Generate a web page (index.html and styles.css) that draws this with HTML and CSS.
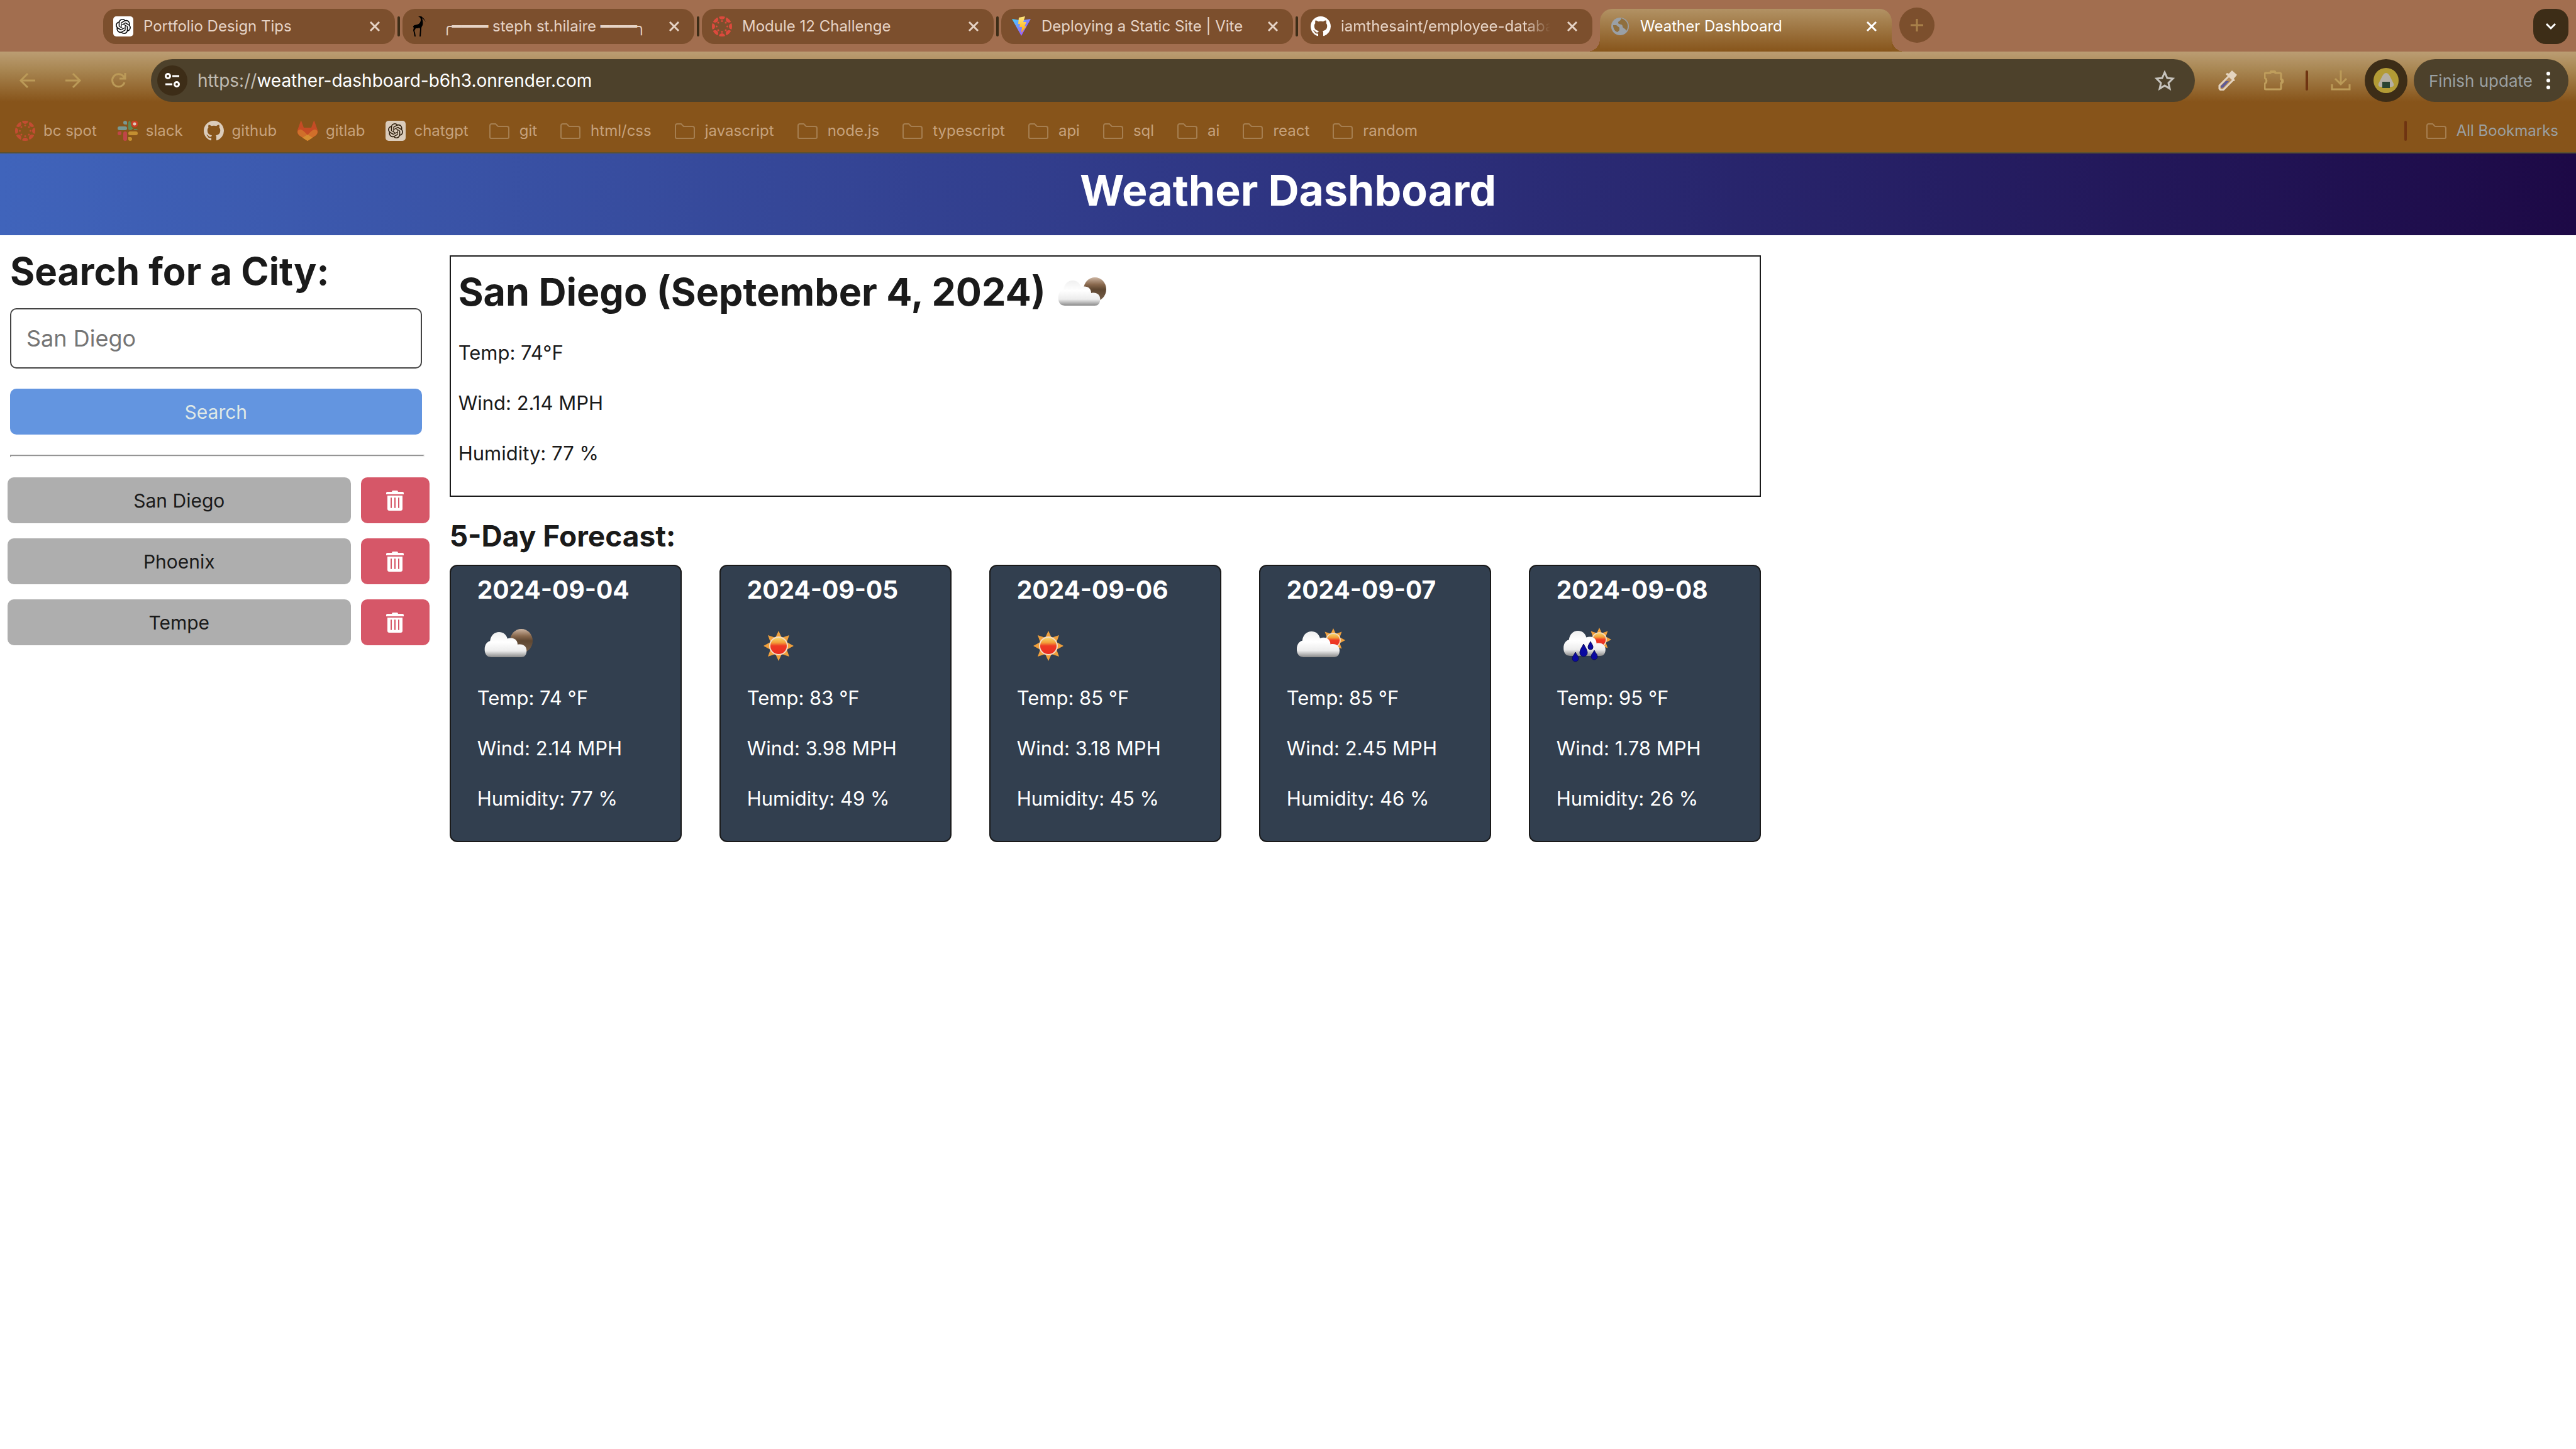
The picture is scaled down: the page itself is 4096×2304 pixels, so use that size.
FILE: index.html
```html
<!DOCTYPE html>
<html lang="en">
<head>
<meta charset="utf-8">
<meta name="viewport" content="width=device-width, initial-scale=1">
<title>Weather Dashboard</title>
<link rel="stylesheet" href="styles.css">
</head>
<body>
<svg class="sprite" aria-hidden="true">
  <defs>
    <linearGradient id="cloud-fill" x1="0" y1="0" x2="0" y2="1"><stop offset="0" stop-color="#f0f0f0"/><stop offset=".4" stop-color="#fff"/><stop offset=".75" stop-color="#ececec"/><stop offset="1" stop-color="#8a8a8a"/></linearGradient>
    <linearGradient id="moon-fill" x1="0" y1="0" x2="0" y2="1"><stop offset="0" stop-color="#cdb5a2"/><stop offset=".3" stop-color="#88684d"/><stop offset=".5" stop-color="#5f4731"/><stop offset="1" stop-color="#77604b"/></linearGradient>
    <linearGradient id="sun-fill" x1="0" y1="0" x2="0" y2="1"><stop offset="0" stop-color="#f7d56a"/><stop offset=".3" stop-color="#f3a03a"/><stop offset=".5" stop-color="#ee3a24"/><stop offset="1" stop-color="#ea2d20"/></linearGradient>
    <linearGradient id="bolt-a" x1="0" y1="0" x2="1" y2="1"><stop offset="0" stop-color="#41d1ff"/><stop offset="1" stop-color="#bd34fe"/></linearGradient>
    <linearGradient id="bolt-b" x1="0" y1="0" x2="0" y2="1"><stop offset="0" stop-color="#ffea83"/><stop offset="1" stop-color="#ffa800"/></linearGradient>
    <symbol id="sun" viewBox="0 0 48 48"><path d="M24 0l5 11 12-4-4 11 11 6-11 6 4 11-12-4-5 11-5-11-12 4 4-11L0 24l11-6-4-11 12 4z" fill="#f0a03c"/><circle cx="24" cy="24" r="15" fill="#f3ddc4"/><circle cx="24" cy="24" r="13" fill="url(#sun-fill)"/></symbol>
    <symbol id="cloud" viewBox="0 0 70 42"><path d="M11 42C3 42 0 36 0 29c0-8 4-13 9-14C10 6 16 0 24 0c7 0 12 4 14 11 9-3 17 1 17 10 9-2 15 3 15 10 0 8-4 11-9 11z" fill="url(#cloud-fill)"/></symbol>
    <symbol id="w-cloud-moon" viewBox="0 0 100 100"><ellipse cx="70" cy="42" rx="18" ry="19" fill="url(#moon-fill)"/><use href="#cloud" x="11" y="28" width="68" height="40"/></symbol>
    <symbol id="w-sun" viewBox="0 0 100 100"><use href="#sun" x="26" y="26" width="48" height="48"/></symbol>
    <symbol id="w-cloud-sun" viewBox="0 0 100 100"><use href="#sun" x="55" y="22" width="38" height="38"/><use href="#cloud" x="16" y="27" width="68" height="41"/></symbol>
    <symbol id="w-rain" viewBox="0 0 100 100"><use href="#sun" x="49" y="21" width="38" height="38"/><use href="#cloud" x="11" y="26" width="67" height="40"/><g fill="#0a09a0" stroke="#0a0a5c" stroke-width="1"><path d="M43 47c3 6 6 9 6 14a6 6 0 0 1-12 0c0-5 3-8 6-14zM54 43c2 4 4 6 4 9a4 4 0 0 1-8 0c0-3 2-5 4-9zM30 60c2 5 5 6 5 10a5 5 0 0 1-10 0c0-4 3-5 5-10zM60 57c2 5 5 6 5 10a5 5 0 0 1-10 0c0-4 3-5 5-10z"/></g></symbol>
    <symbol id="openai" viewBox="0 0 32 32"><rect width="32" height="32" rx="5" fill="#fff"/><path transform="translate(4 4)" fill="#0b0b0b" d="M22.2819 9.8211a5.9847 5.9847 0 0 0-.5157-4.9108 6.0462 6.0462 0 0 0-6.5098-2.9A6.0651 6.0651 0 0 0 4.9807 4.1818a5.9847 5.9847 0 0 0-3.9977 2.9 6.0462 6.0462 0 0 0 .7427 7.0966 5.98 5.98 0 0 0 .511 4.9107 6.051 6.051 0 0 0 6.5146 2.9001A5.9847 5.9847 0 0 0 13.2599 24a6.0557 6.0557 0 0 0 5.7718-4.2058 5.9894 5.9894 0 0 0 3.9977-2.9001 6.0557 6.0557 0 0 0-.7475-7.0729zm-9.022 12.6081a4.4755 4.4755 0 0 1-2.8764-1.0408l.1419-.0804 4.7783-2.7582a.7948.7948 0 0 0 .3927-.6813v-6.7369l2.02 1.1686a.071.071 0 0 1 .038.052v5.5826a4.504 4.504 0 0 1-4.4945 4.4944zm-9.6607-4.1254a4.4708 4.4708 0 0 1-.5346-3.0137l.142.0852 4.783 2.7582a.7712.7712 0 0 0 .7806 0l5.8428-3.3685v2.3324a.0804.0804 0 0 1-.0332.0615L9.74 19.9502a4.4992 4.4992 0 0 1-6.1408-1.6464zM2.3408 7.8956a4.485 4.485 0 0 1 2.3655-1.9728V11.6a.7664.7664 0 0 0 .3879.6765l5.8144 3.3543-2.0201 1.1685a.0757.0757 0 0 1-.071 0l-4.8303-2.7865A4.504 4.504 0 0 1 2.3408 7.872zm16.5963 3.8558L13.1038 8.364 15.1192 7.2a.0757.0757 0 0 1 .071 0l4.8303 2.7913a4.4944 4.4944 0 0 1-.6765 8.1042v-5.6772a.79.79 0 0 0-.407-.667zm2.0107-3.0231l-.142-.0852-4.7735-2.7818a.7759.7759 0 0 0-.7854 0L9.409 9.2297V6.8974a.0662.0662 0 0 1 .0284-.0615l4.8303-2.7866a4.4992 4.4992 0 0 1 6.6802 4.66zM8.3065 12.863l-2.02-1.1638a.0804.0804 0 0 1-.038-.0567V6.0742a4.4992 4.4992 0 0 1 7.3757-3.4537l-.142.0805L8.704 5.459a.7948.7948 0 0 0-.3927.6813zm1.0976-2.3654l2.602-1.4998 2.6069 1.4998v2.9994l-2.5974 1.4997-2.6067-1.4997Z"/></symbol>
    <symbol id="goat" viewBox="0 0 32 32"><path d="M9 0c3-1 6 0 7 2 2 1 3 3 5 7-2-3-4-5-6-6 1 3 2 7 1 11-1 2-2 3-2 5l-1 13h-2l1-12-1-2c-2 1-4 1-6 1l-2 4 1 3 1 6H3L2 26l-1-4 1-4c-2-1-1-3 1-4 3-1 6-1 8-3 2-3 3-6 1-9z" fill="#000"/></symbol>
    <symbol id="canvas" viewBox="0 0 32 32"><clipPath id="round"><circle cx="16" cy="16" r="16"/></clipPath><g fill="#dc4a3d"><g clip-path="url(#round)"><circle cx="16" cy="0" r="5"/><circle cx="16" cy="32" r="5"/><circle cx="0" cy="16" r="5"/><circle cx="32" cy="16" r="5"/><circle cx="5" cy="5" r="5"/><circle cx="27" cy="5" r="5"/><circle cx="5" cy="27" r="5"/><circle cx="27" cy="27" r="5"/></g><circle cx="16" cy="7.500" r="1.500"/><circle cx="16" cy="24.500" r="1.500"/><circle cx="7.500" cy="16" r="1.500"/><circle cx="24.500" cy="16" r="1.500"/><circle cx="10" cy="10" r="1.500"/><circle cx="22" cy="10" r="1.500"/><circle cx="10" cy="22" r="1.500"/><circle cx="22" cy="22" r="1.500"/></g></symbol>
    <symbol id="vite" viewBox="0 0 32 32"><path d="M1 4l12 2h6l12-2L16 31z" fill="url(#bolt-a)"/><path d="M12 2l10-2-3 9h5l-3 7h3l-8 10 1-9h-4l1-5h-3z" fill="url(#bolt-b)"/></symbol>
    <symbol id="github" viewBox="0 0 16 16"><path fill="#fff" d="M8 0C3.580 0 0 3.580 0 8c0 3.540 2.290 6.530 5.470 7.590.4.070.550-.170.550-.380 0-.190-.010-.820-.010-1.490-2.010.370-2.530-.490-2.690-.940-.090-.230-.480-.940-.820-1.130-.280-.150-.680-.520-.010-.530.630-.010 1.080.580 1.230.820.720 1.210 1.870.870 2.330.660.070-.520.280-.870.510-1.070-1.780-.2-3.640-.890-3.640-3.950 0-.870.310-1.590.820-2.150-.080-.2-.360-1.020.080-2.120 0 0 .670-.210 2.200.820.640-.180 1.320-.270 2-.270s1.360.090 2 .270c1.530-1.040 2.200-.820 2.200-.820.440 1.100.160 1.920.080 2.120.510.560.820 1.270.820 2.150 0 3.070-1.870 3.750-3.650 3.950.290.250.540.730.540 1.480 0 1.070-.010 1.930-.010 2.200 0 .210.150.460.550.380A8.010 8.010 0 0 0 16 8c0-4.420-3.580-8-8-8z"/></symbol>
    <symbol id="globe" viewBox="0 0 32 32"><circle cx="16" cy="16" r="14" fill="#9aa0a6"/><path d="M5 14h5l5 4v4l-3 3c-4-1-7-5-7-11zM18 3c0 4-5 4-5 7 0 4 7 1 7 6 0 3 5 3 6 7 5-7 2-17-8-20z" fill="#8f6f3e"/></symbol>
    <symbol id="slack" viewBox="0 0 32 32"><g fill="#72b6c4"><rect y="9" width="15" height="6" rx="3"/><path d="M15 6h-3a3 3 0 1 1 3-3z"/></g><g fill="#4ea06e"><path d="M17 3c0-2 2-3 3-3l2 9 3 4h-2l-1 2h-2a3 3 0 0 1-3-3zM26 13h6a3 3 0 0 1-3 2h-3z"/></g><g fill="#d93f5c"><rect x="9" y="17" width="6" height="15" rx="3"/><path d="M6 17v3a3 3 0 1 1-3-3z"/></g><g fill="#dda93c"><rect x="17" y="17" width="15" height="6" rx="3"/><path d="M17 26h3a3 3 0 1 1-3 3z"/></g><circle cx="27" cy="5" r="4" fill="#fff" stroke="#e5372b" stroke-width="3"/></symbol>
    <symbol id="gitlab" viewBox="0 0 32 32"><path d="M6 0l4 11h12l4-11c1 0 1 0 1 1l5 14c1 4-1 7-4 9L16 32 4 24c-3-2-5-5-4-9L5 1c0-1 0-1 1-1z" fill="#e0492b"/><path d="M0 17c3-5 8-4 16 6 8-10 13-11 16-6 0 3-2 6-4 7L16 32 4 24c-2-1-4-4-4-7z" fill="#f07b32"/><path d="M16 22l8 5-8 5-8-5z" fill="#f6a63a"/></symbol>
    <symbol id="folder" viewBox="0 0 32 32"><path d="M1 26V8a3 3 0 0 1 3-3h6l4 4h14a3 3 0 0 1 3 3v14a2 2 0 0 1-2 2H3a2 2 0 0 1-2-2z" fill="none" stroke="#b39168" stroke-width="2"/></symbol>
    <symbol id="close" viewBox="0 0 24 24"><path d="M5 5l14 14M19 5L5 19" stroke="currentColor" stroke-width="3" fill="none"/></symbol>
    <symbol id="trash" viewBox="0 0 28 32"><path fill="#fff" d="M10 0h8l1 2h7a2 2 0 0 1 2 2v2H0V4a2 2 0 0 1 2-2h7zM2 8h24v21a3 3 0 0 1-3 3H5a3 3 0 0 1-3-3z"/><path d="M8 12v15M14 12v15M20 12v15" stroke="#d65768" stroke-width="2" stroke-linecap="round"/></symbol>
  </defs>
</svg>

<div class="browser">
  <div class="tabstrip">
    <div class="tab"><svg class="i32"><use href="#openai"/></svg><span class="tab-title">Portfolio Design Tips</span><button class="tab-close" aria-label="Close tab"><svg class="i24"><use href="#close"/></svg></button></div>
    <span class="tab-sep"></span>
    <div class="tab"><svg class="i32"><use href="#goat"/></svg><span class="tab-title">╭━━━━ steph st.hilaire ━━━━╮</span><button class="tab-close" aria-label="Close tab"><svg class="i24"><use href="#close"/></svg></button></div>
    <span class="tab-sep"></span>
    <div class="tab"><svg class="i32"><use href="#canvas"/></svg><span class="tab-title">Module 12 Challenge</span><button class="tab-close" aria-label="Close tab"><svg class="i24"><use href="#close"/></svg></button></div>
    <span class="tab-sep"></span>
    <div class="tab"><svg class="i32"><use href="#vite"/></svg><span class="tab-title">Deploying a Static Site | Vite</span><button class="tab-close" aria-label="Close tab"><svg class="i24"><use href="#close"/></svg></button></div>
    <span class="tab-sep"></span>
    <div class="tab"><svg class="i32"><use href="#github"/></svg><span class="tab-title tab-title-fade">iamthesaint/employee-databa</span><button class="tab-close" aria-label="Close tab"><svg class="i24"><use href="#close"/></svg></button></div>
    <span class="tab-sep tab-sep-blank"></span>
    <div class="tab tab-active"><svg class="i32"><use href="#globe"/></svg><span class="tab-title">Weather Dashboard</span><button class="tab-close" aria-label="Close tab"><svg class="i24"><use href="#close"/></svg></button></div>
    <button class="new-tab" aria-label="New tab"><svg class="i24" viewBox="0 0 24 24"><path d="M12 2v20M2 12h20" stroke="#a9814a" stroke-width="3"/></svg></button>
    <button class="tab-search" aria-label="Search tabs"><svg class="i24" viewBox="0 0 24 24"><path d="M5 8l7 7 7-7" fill="none" stroke="#fff" stroke-width="3"/></svg></button>
  </div>

  <div class="toolbar">
    <div class="nav">
      <button class="icon-button" aria-label="Back"><svg class="i32" viewBox="0 0 32 32"><path d="M28 16H6M16 5L5 16l11 11" class="line"/></svg></button>
      <button class="icon-button" aria-label="Forward"><svg class="i32" viewBox="0 0 32 32"><path d="M4 16h22M16 5l11 11-11 11" class="line"/></svg></button>
      <button class="icon-button" aria-label="Reload"><svg class="i32" viewBox="0 0 32 32"><path d="M26 19a10 10 0 1 1-2-10l3 4M27 4v9h-9" class="line"/></svg></button>
    </div>
    <div class="address">
      <button class="site-info" aria-label="Site information"><svg class="i24" viewBox="0 0 24 24"><path d="M12 5h11M1 18h11" stroke="#fff" stroke-width="3"/><g fill="none" stroke="#fff" stroke-width="3"><circle cx="5" cy="5" r="3.500"/><circle cx="19" cy="18" r="3.500"/></g></svg></button>
      <span class="url"><span class="url-scheme">https://</span>weather-dashboard-b6h3.onrender.com</span>
      <button class="icon-button" aria-label="Bookmark this page"><svg class="i32" viewBox="0 0 32 32"><path d="M16 3l4 9 9 1-7 7 2 9-8-5-8 5 2-9-7-7 9-1z" fill="none" stroke="#c6c3bd" stroke-width="3"/></svg></button>
    </div>
    <div class="extensions">
      <button class="icon-button" aria-label="Color picker"><svg class="i32" viewBox="0 0 32 32"><path d="M19 8L3 24v5l2 2h4l16-16" fill="#b58b5c" stroke="#e4d4bf" stroke-width="3"/><path d="M13 17h5L9 27l-3 1-1-3z" fill="#5d5a98"/><path d="M15 4l3 1 5-5 8 7-5 6 2 3-3 1L13 6z" fill="#e4d4bf"/></svg></button>
      <button class="icon-button" aria-label="Extensions"><svg class="i32" viewBox="0 0 32 32"><path d="M3 4h7a4 4 0 0 1 8 0h7q2 0 2 2v8a3 3 0 0 1 0 6v8q0 2-2 2H3q-2 0-2-2v-7a5 5 0 0 0 0-9V6q0-2 2-2z" fill="none" stroke="#bf9e5c" stroke-width="3"/><path d="M10 4a4 4 0 0 1 8 0zM27 13a4 4 0 0 1 0 8z" fill="#bf9e5c"/></svg></button>
    </div>
    <span class="tool-sep"></span>
    <button class="icon-button download" aria-label="Downloads"><svg class="i32" viewBox="0 0 32 32"><path d="M16 0v22M7 13l9 9 9-9M2 22v8h28v-8" class="line"/></svg></button>
    <button class="avatar" aria-label="Profile"><svg class="i40" viewBox="0 0 40 40"><circle cx="20" cy="20" r="20" fill="#b39b35"/><path d="M20 8c3 0 5 3 7 7l5 10c1 4-1 5-4 5H12c-3 0-5-1-4-5l5-10c2-4 4-7 7-7z" fill="#b5afa4"/><rect x="14" y="22" width="12" height="10" fill="#294332"/></svg></button>
    <button class="update">Finish update<svg class="dots" viewBox="0 0 8 32"><g fill="#fff"><circle cx="4" cy="5" r="3"/><circle cx="4" cy="16" r="3"/><circle cx="4" cy="27" r="3"/></g></svg></button>
  </div>

  <nav class="bookmarks">
    <a class="bookmark" href="#"><svg class="i32"><use href="#canvas"/></svg>bc spot</a>
    <a class="bookmark" href="#"><svg class="i32"><use href="#slack"/></svg>slack</a>
    <a class="bookmark" href="#"><svg class="i32"><use href="#github"/></svg>github</a>
    <a class="bookmark" href="#"><svg class="i32"><use href="#gitlab"/></svg>gitlab</a>
    <a class="bookmark" href="#"><svg class="i32"><use href="#openai"/></svg>chatgpt</a>
    <a class="bookmark folder" href="#"><svg class="i32"><use href="#folder"/></svg>git</a>
    <a class="bookmark folder" href="#"><svg class="i32"><use href="#folder"/></svg>html/css</a>
    <a class="bookmark folder" href="#"><svg class="i32"><use href="#folder"/></svg>javascript</a>
    <a class="bookmark folder" href="#"><svg class="i32"><use href="#folder"/></svg>node.js</a>
    <a class="bookmark folder" href="#"><svg class="i32"><use href="#folder"/></svg>typescript</a>
    <a class="bookmark folder" href="#"><svg class="i32"><use href="#folder"/></svg>api</a>
    <a class="bookmark folder" href="#"><svg class="i32"><use href="#folder"/></svg>sql</a>
    <a class="bookmark folder" href="#"><svg class="i32"><use href="#folder"/></svg>ai</a>
    <a class="bookmark folder" href="#"><svg class="i32"><use href="#folder"/></svg>react</a>
    <a class="bookmark folder" href="#"><svg class="i32"><use href="#folder"/></svg>random</a>
    <span class="tool-sep bookmarks-end"></span>
    <a class="bookmark folder all" href="#"><svg class="i32"><use href="#folder"/></svg>All Bookmarks</a>
  </nav>
</div>

<header class="banner"><h1>Weather Dashboard</h1></header>

<main class="page">
  <aside class="sidebar">
    <form class="search">
      <label class="search-label" for="city">Search for a City:</label>
      <input class="search-input" id="city" type="text" placeholder="San Diego">
      <button class="button search-button" type="button">Search</button>
    </form>
    <hr class="rule">
    <div class="history">
      <div class="history-row"><button class="button city">San Diego</button><button class="button delete" aria-label="Delete San Diego"><svg class="trash"><use href="#trash"/></svg></button></div>
      <div class="history-row"><button class="button city">Phoenix</button><button class="button delete" aria-label="Delete Phoenix"><svg class="trash"><use href="#trash"/></svg></button></div>
      <div class="history-row"><button class="button city">Tempe</button><button class="button delete" aria-label="Delete Tempe"><svg class="trash"><use href="#trash"/></svg></button></div>
    </div>
  </aside>

  <div class="weather">
    <section class="today">
      <div class="today-head"><h2>San Diego (September 4, 2024)</h2><svg class="weather-icon"><use href="#w-cloud-moon"/></svg></div>
      <div class="readings"><p>Temp: 74°F</p><p>Wind: 2.14 MPH</p><p>Humidity: 77 %</p></div>
    </section>
    <section>
      <h3 class="forecast-title">5-Day Forecast:</h3>
      <div class="forecast">
        <article class="card"><h4>2024-09-04</h4><svg class="weather-icon"><use href="#w-cloud-moon"/></svg><div class="readings"><p>Temp: 74 °F</p><p>Wind: 2.14 MPH</p><p>Humidity: 77 %</p></div></article>
        <article class="card"><h4>2024-09-05</h4><svg class="weather-icon"><use href="#w-sun"/></svg><div class="readings"><p>Temp: 83 °F</p><p>Wind: 3.98 MPH</p><p>Humidity: 49 %</p></div></article>
        <article class="card"><h4>2024-09-06</h4><svg class="weather-icon"><use href="#w-sun"/></svg><div class="readings"><p>Temp: 85 °F</p><p>Wind: 3.18 MPH</p><p>Humidity: 45 %</p></div></article>
        <article class="card"><h4>2024-09-07</h4><svg class="weather-icon"><use href="#w-cloud-sun"/></svg><div class="readings"><p>Temp: 85 °F</p><p>Wind: 2.45 MPH</p><p>Humidity: 46 %</p></div></article>
        <article class="card"><h4>2024-09-08</h4><svg class="weather-icon"><use href="#w-rain"/></svg><div class="readings"><p>Temp: 95 °F</p><p>Wind: 1.78 MPH</p><p>Humidity: 26 %</p></div></article>
      </div>
    </section>
  </div>
</main>
</body>
</html>
```
FILE: styles.css
```css
* { box-sizing: border-box; }
body { margin: 0; background: #fff; color: #1a1a1a; font-family: "Inter", "DejaVu Sans Mono", sans-serif; font-size: 31px; }
h1, h2, h3, h4, p { margin: 0; }
button { margin: 0; padding: 0; border: 0; background: none; color: inherit; font: inherit; }
svg { display: block; flex: none; }
.sprite { position: absolute; width: 0; height: 0; }
.i24 { width: 24px; height: 24px; }
.i32 { width: 32px; height: 32px; }
.i40 { width: 40px; height: 40px; }
.line { fill: none; stroke: #bb9a58; stroke-width: 3; }

/* Browser window */
.browser { background: #87541a; border-bottom: 2px solid #5c5130; font-size: 24px; }
.tabstrip { display: flex; align-items: flex-start; height: 82px; padding: 14px 12px 0 164px; background: #a26e4f; }
.tab { display: flex; align-items: center; gap: 16px; flex: 0 1 464px; min-width: 0; height: 56px; padding: 0 20px 0 16px; border-radius: 20px; background: #7c4f2d; color: #e6d3c5; }
.tab-title { flex: 1; min-width: 0; overflow: hidden; white-space: nowrap; line-height: 32px; }
.tab-title-fade { -webkit-mask-image: linear-gradient(to right, #000 86%, transparent 98%); mask-image: linear-gradient(to right, #000 86%, transparent 98%); }
.tab-sep { flex: none; width: 4px; height: 32px; margin: 12px 4px 0; border-radius: 2px; background: #3d2d17; }
.tab-sep-blank { background: none; }
.tab-active { position: relative; height: 68px; padding-bottom: 12px; border-radius: 20px 20px 0 0; background: linear-gradient(#b29264, #87551b); color: #fff; }
.tab-active::before, .tab-active::after { content: ""; position: absolute; bottom: 0; width: 20px; height: 20px; }
.tab-active::before { right: 100%; background: radial-gradient(circle at 0 0, transparent 20px, #89581e 20px); }
.tab-active::after { left: 100%; background: radial-gradient(circle at 100% 0, transparent 20px, #89581e 20px); }
.new-tab { display: grid; place-items: center; flex: none; width: 56px; height: 56px; margin: -2px 0 0 12px; border-radius: 50%; background: #7c4f2d; }
.tab-search { display: grid; place-items: center; flex: none; width: 56px; height: 56px; margin-left: auto; border-radius: 20px; background: #3d2d17; }

.toolbar { display: flex; align-items: center; padding: 12px 12px 0 28px; background: linear-gradient(#bb9d73, #a98753 35%, #87541a); }
.nav { display: flex; gap: 40px; margin-right: 36px; }
.address { display: flex; align-items: center; flex: 1; min-width: 0; height: 68px; padding: 0 32px 0 10px; border-radius: 34px; background: #4d412b; color: #fff; font-size: 28px; }
.site-info { display: grid; place-items: center; width: 48px; height: 48px; margin-right: 16px; border-radius: 50%; background: #3d2d17; }
.url { flex: 1; }
.url-scheme { color: #c0bbb1; }
.extensions { display: flex; gap: 42px; margin: 0 34px 0 36px; }
.tool-sep { flex: none; width: 4px; height: 32px; border-radius: 2px; background: #6f3411; }
.download { margin: 0 22px 0 36px; }
.avatar { display: grid; place-items: center; width: 68px; height: 68px; margin-right: 10px; border-radius: 50%; background: #3d2d17; }
.update { display: flex; align-items: center; justify-content: space-between; width: 246px; height: 68px; padding: 0 28px 0 24px; border-radius: 34px; background: #4d412b; color: #9ba0a2; font-size: 26px; white-space: nowrap; }
.dots { width: 8px; height: 32px; }

.bookmarks { display: flex; align-items: center; gap: 33px; padding: 30px 28px 18px 24px; line-height: 32px; }
.bookmark { display: flex; align-items: center; gap: 13px; color: #c6a27d; text-decoration: none; white-space: nowrap; }
.bookmark svg { opacity: .7; }
.folder { gap: 16px; margin-right: 4px; }
.bookmarks-end { margin-left: auto; margin-right: -2px; }
.all { margin-right: 0; color: #9ba0a2; }

/* Dashboard */
.banner { padding: 16px 16px 30px; background: linear-gradient(to right, #4064bb, #2e3481 50%, #1d0946); color: #fff; text-align: center; }
.banner h1 { font-size: 68px; line-height: 84px; }
.page { display: grid; grid-template-columns: 1fr 5fr; }
.sidebar { padding-top: 21px; }
.search { display: flex; flex-direction: column; padding: 0 12px 0 16px; }
.search-label { font-size: 60px; font-weight: 700; line-height: 72px; margin-bottom: 23px; white-space: nowrap; }
.search-input { width: 100%; height: 96px; margin-bottom: 32px; padding: 0 24px; border: 2px solid #444; border-radius: 10px; background: #fff; color: #1a1a1a; font: inherit; font-size: 36px; }
.search-input::placeholder { color: #757575; opacity: 1; }
.button { height: 73px; border-radius: 10px; font-size: 30px; }
.search-button { background: #6395e0; color: #dfe8e6; }
.rule { margin: 32px 8px 32px 16px; border: 2px solid; border-color: #959595 #f2f2f2 #f2f2f2 #959595; }
.history { display: grid; gap: 24px; padding-left: 12px; }
.history-row { display: flex; gap: 16px; }
.city { flex: 5; background: #aeaeae; }
.delete { display: grid; place-items: center; flex: 1; background: #d65768; }
.trash { width: 28px; height: 32px; }

.weather { max-width: 2117px; padding: 32px 0 0 32px; }
.today { padding: 10px 12px 43px; border: 2px solid #1a1a1a; }
.today-head { display: flex; align-items: flex-start; gap: 8px; margin-bottom: 19px; }
.today-head h2 { font-size: 61px; line-height: 92px; }
.weather-icon { width: 100px; height: 100px; }
.readings { display: grid; gap: 32px; line-height: 48px; }
.forecast-title { margin: 32px 0 16px; font-size: 46px; line-height: 60px; }
.forecast { display: grid; grid-template-columns: repeat(5, 1fr); gap: 60px; }
.card { padding: 14px 20px 43px 42px; border: 2px solid #1a1a1a; border-radius: 12px; background: #323f4f; color: #fff; }
.card h4 { margin-bottom: 15px; font-size: 39px; line-height: 48px; }
.card .weather-icon { margin-bottom: 9px; }
```
